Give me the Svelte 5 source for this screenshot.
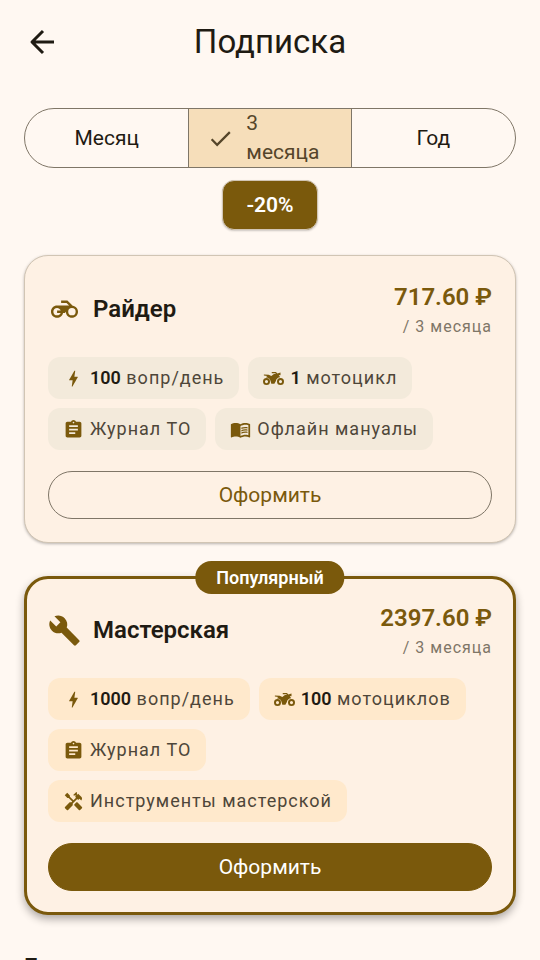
<script lang="ts">
  interface Feature {
    icon: string;
    count?: string;
    text: string;
  }

  interface Plan {
    id: string;
    name: string;
    icon: string;
    price: string;
    popular: boolean;
    features: Feature[];
  }

  const icons: Record<string, string> = {
    motorcycle:
      'M19.3 8.6L14.6 4H9v2.200h4.800l2.300 2.300H5.400c-3 0-5.400 2.400-5.400 5.400s2.400 5.400 5.400 5.400c2.650 0 4.800-1.900 5.300-4.300h1.600l.9-1.100c0 3 2.400 5.400 5.400 5.400s5.400-2.400 5.400-5.400c0-2.750-2.050-5-4.700-5.300zM8.600 15c-.5 1.300-1.750 2.200-3.200 2.200-1.850 0-3.300-1.450-3.300-3.300s1.450-3.300 3.300-3.300c1.450 0 2.700.9 3.200 2.200H5.400V15h3.200zM18.600 17.200a3.300 3.300 0 1 1 0-6.600 3.300 3.300 0 0 1 0 6.600z',
    wrench:
      'M22.7 19l-9.1-9.1c.9-2.3.4-5-1.5-6.9-2-2-5-2.4-7.4-1.3L9 6 6 9 1.6 4.7C.4 7.1.9 10.1 2.9 12.1c1.9 1.9 4.6 2.4 6.9 1.5l9.1 9.1c.4.4 1 .4 1.4 0l2.3-2.3c.5-.4.5-1.1.1-1.4z',
    bolt:
      'M11 21h-1l1-7H7.5c-.58 0-.57-.32-.38-.66.19-.34.05-.08.07-.12C8.48 10.94 10.42 7.54 13 3h1l-1 7h3.5c.49 0 .56.33.47.51l-.07.15C12.96 17.55 11 21 11 21z',
    bike:
      'M4 11.500a4 4 0 1 0 0 8 4 4 0 0 0 0-8zm0 2.200a1.800 1.800 0 1 1 0 3.600 1.800 1.800 0 0 1 0-3.600zM20 11.500a4 4 0 1 0 0 8 4 4 0 0 0 0-8zm0 2.200a1.800 1.800 0 1 1 0 3.600 1.800 1.800 0 0 1 0-3.600zM1 7.500l5.500.3 3 1.200 3-2.200h2.300L13.900 6H10V4.500h4.800l1.600 1.700L20 5v3.300l-2-.2 1.600 2.400c-2.600.2-4.500 1.800-5 4.500l-1.600 3H9.500L8.700 15c-.4-2.500-2.200-4.300-5.400-4.500l1.500-1.300L1 8.500z',
    journal:
      'M19 3h-4.18C14.4 1.84 13.3 1 12 1c-1.3 0-2.4.84-2.82 2H5c-1.1 0-2 .9-2 2v14c0 1.1.9 2 2 2h14c1.1 0 2-.9 2-2V5c0-1.1-.9-2-2-2zm-7 0c.55 0 1 .45 1 1s-.45 1-1 1-1-.45-1-1 .45-1 1-1zm2 14H7v-2h7v2zm3-4H7v-2h10v2zm0-4H7V7h10v2z',
    manual:
      'M21 5c-1.11-.35-2.33-.5-3.5-.5-1.95 0-4.05.4-5.5 1.5-1.45-1.1-3.55-1.5-5.5-1.5S2.45 4.9 1 6v14.65c0 .25.25.5.5.5.1 0 .15-.05.25-.05C3.1 20.45 5.05 20 6.5 20c1.95 0 4.05.4 5.5 1.5 1.35-.85 3.8-1.5 5.5-1.5 1.65 0 3.35.3 4.75 1.05.1.05.15.05.25.05.25 0 .5-.25.5-.5V6c-.6-.45-1.25-.75-2-1zm0 13.5c-1.1-.35-2.3-.5-3.5-.5-1.7 0-4.15.65-5.5 1.5V8c1.35-.85 3.8-1.5 5.5-1.5 1.2 0 2.4.15 3.5.5v11.5zM17.5 10.5c.88 0 1.73.09 2.5.26V9.24c-.79-.15-1.64-.24-2.5-.24-1.7 0-3.24.29-4.5.83v1.66c1.13-.64 2.7-.99 4.5-.99zM13 12.49v1.66c1.13-.64 2.7-.99 4.5-.99.88 0 1.73.09 2.5.26V11.9c-.79-.15-1.64-.24-2.5-.24-1.7 0-3.24.3-4.5.83zM17.5 14.33c-1.7 0-3.24.29-4.5.83v1.66c1.13-.64 2.7-.99 4.5-.99.88 0 1.73.09 2.5.26v-1.52c-.79-.16-1.64-.24-2.5-.24z',
    tools:
      'M21.67 18.17l-5.3-5.3h-.99l-2.54 2.54v.99l5.3 5.3c.39.39 1.02.39 1.41 0l2.12-2.12c.39-.38.39-1.02 0-1.41zM17.34 10.19l1.41-1.41 2.12 2.12c1.17-1.17 1.17-3.07 0-4.24l-3.54-3.54-1.41 1.41V1.71L15.22 1l-3.54 3.54.71.71h2.83l-1.41 1.41 1.06 1.06-2.89 2.89-4.13-4.13V5.06L4.83 2.04 2 4.87 5.03 7.9h1.41l4.13 4.13-.85.85H7.6l-5.3 5.3c-.39.39-.39 1.02 0 1.41l2.12 2.12c.39.39 1.02.39 1.41 0l5.3-5.3v-2.12l5.15-5.15 1.06 1.05z'
  };

  const periods = ['Месяц', '3 месяца', 'Год'];

  const plans: Plan[] = [
    {
      id: 'rider',
      name: 'Райдер',
      icon: 'motorcycle',
      price: '717.60 ₽',
      popular: false,
      features: [
        { icon: 'bolt', count: '100', text: 'вопр/день' },
        { icon: 'bike', count: '1', text: 'мотоцикл' },
        { icon: 'journal', text: 'Журнал ТО' },
        { icon: 'manual', text: 'Офлайн мануалы' }
      ]
    },
    {
      id: 'workshop',
      name: 'Мастерская',
      icon: 'wrench',
      price: '2397.60 ₽',
      popular: true,
      features: [
        { icon: 'bolt', count: '1000', text: 'вопр/день' },
        { icon: 'bike', count: '100', text: 'мотоциклов' },
        { icon: 'journal', text: 'Журнал ТО' },
        { icon: 'tools', text: 'Инструменты мастерской' }
      ]
    }
  ];

  let selected = $state('3 месяца');
</script>

<div class="screen">
  <header class="app-bar">
    <button class="back" type="button" aria-label="Назад">
      <svg viewBox="0 0 36 36" fill="none" stroke="currentColor" stroke-width="3">
        <path d="M30 18H8M19 7L8 18L19 29" stroke-linejoin="round" />
      </svg>
    </button>
    <h1>Подписка</h1>
  </header>

  <main>
    <!-- Period switch -->
    <div class="periods">
      {#each periods as period}
        <button
          type="button"
          class="period"
          class:selected={selected === period}
          aria-pressed={selected === period}
          onclick={() => (selected = period)}
        >
          {#if selected === period}
            <svg viewBox="0 0 24 24" fill="currentColor">
              <path d="M9 16.170L4.830 12l-1.420 1.410L9 19 21 7l-1.410-1.410z" />
            </svg>
          {/if}
          <span>{period}</span>
        </button>
      {/each}
    </div>
    <div class="discount">-20%</div>

    <!-- Plans -->
    <div class="plans">
      {#each plans as plan (plan.id)}
        <section class="plan" class:popular={plan.popular}>
          {#if plan.popular}
            <span class="ribbon">Популярный</span>
          {/if}
          <div class="plan-head">
            <svg class="plan-icon {plan.icon}" viewBox="0 0 24 24" fill="currentColor">
              <path d={icons[plan.icon]} fill-rule="evenodd" />
            </svg>
            <h2>{plan.name}</h2>
            <div class="cost">
              <strong>{plan.price}</strong>
              <span>/ 3 месяца</span>
            </div>
          </div>
          <ul class="features">
            {#each plan.features as feature}
              <li>
                <svg viewBox="0 0 24 24" fill="currentColor">
                  <path d={icons[feature.icon]} fill-rule="evenodd" />
                </svg>
                <span>{#if feature.count}<b>{feature.count}</b>{' '}{/if}{feature.text}</span>
              </li>
            {/each}
          </ul>
          <button class="subscribe" type="button">Оформить</button>
        </section>
      {/each}
    </div>

    <h2 class="extras">Гараж</h2>
  </main>
</div>

<style>
  :global(body) {
    background: #fff8f2;
  }

  .screen {
    --primary: #7a590c;
    --text: #1f1b13;
    --muted: #4e4639;
    --outline: #7f7667;
    font-family: Roboto, 'Noto Sans', sans-serif;
    color: var(--text);
  }

  h1,
  h2 {
    margin: 0;
    font-weight: 400;
  }

  button {
    font: inherit;
    color: inherit;
    cursor: pointer;
  }

  svg {
    flex: none;
    display: block;
  }

  .app-bar {
    display: grid;
    grid-template-columns: 84px 1fr 84px;
    align-items: center;
    height: 84px;
  }

  .back {
    justify-self: center;
    padding: 6px;
    border: 0;
    background: none;
  }

  .back svg {
    width: 36px;
    height: 36px;
  }

  h1 {
    font-size: 33px;
    line-height: 42px;
    text-align: center;
  }

  main {
    padding: 24px;
  }

  /* Period switch */
  .periods {
    display: grid;
    grid-template-columns: repeat(3, 1fr);
    height: 60px;
    box-sizing: border-box;
    border: 1px solid var(--outline);
    border-radius: 30px;
    overflow: hidden;
  }

  .period {
    display: flex;
    align-items: center;
    justify-content: center;
    gap: 12px;
    padding: 0 18px;
    border: 0;
    background: none;
    font-size: 21px;
    line-height: 29px;
    text-align: left;
  }

  .period.selected {
    border: solid var(--outline);
    border-width: 0 1px;
    background: #f6deba;
    color: #55452a;
  }

  .period svg {
    width: 27px;
    height: 27px;
  }

  .discount {
    width: fit-content;
    margin: 12px auto 0;
    padding: 9px 23px;
    border: 1px solid #d1c5b4;
    border-radius: 12px;
    background: var(--primary);
    box-shadow: 0 1px 2px rgba(0, 0, 0, 0.2);
    color: #fff;
    font-size: 21px;
    font-weight: 600;
    line-height: 30px;
  }

  /* Plans */
  .plans {
    display: flex;
    flex-direction: column;
    gap: 33px;
    margin-top: 25px;
  }

  .plan {
    position: relative;
    padding: 23px;
    border: 1px solid #d1c5b4;
    border-radius: 24px;
    background: #fef1e4;
    box-shadow: 0 1px 3px rgba(0, 0, 0, 0.28);
  }

  .plan.popular {
    padding: 21px;
    border: 3px solid var(--primary);
    box-shadow: 0 4px 8px rgba(0, 0, 0, 0.32);
  }

  .ribbon {
    position: absolute;
    top: -18px;
    left: 50%;
    transform: translateX(-50%);
    padding: 6px 21px;
    border-radius: 16px;
    background: var(--primary);
    color: #fff;
    font-size: 18px;
    font-weight: 600;
    line-height: 21px;
  }

  .plan-head {
    display: flex;
    align-items: center;
    gap: 12px;
  }

  .plan-icon {
    width: 33px;
    height: 33px;
    color: var(--primary);
  }

  .plan-icon.motorcycle {
    box-sizing: border-box;
    padding: 3px;
  }

  .plan h2 {
    flex: 1;
    font-size: 24px;
    font-weight: 600;
    line-height: 36px;
  }

  .cost {
    display: flex;
    flex-direction: column;
    align-items: flex-end;
  }

  .cost strong {
    color: var(--primary);
    font-size: 24px;
    font-weight: 600;
    line-height: 36px;
  }

  .cost span {
    color: var(--outline);
    font-size: 16px;
    letter-spacing: 1px;
    line-height: 24px;
  }

  .features {
    display: flex;
    flex-wrap: wrap;
    gap: 9px;
    margin: 18px 0 21px;
    padding: 0;
    list-style: none;
  }

  .features li {
    display: flex;
    align-items: center;
    gap: 6px;
    padding: 9px 15px;
    border-radius: 12px;
    background: #f3eadb;
    color: var(--muted);
    font-size: 18px;
    letter-spacing: 1px;
    line-height: 24px;
  }

  .popular .features li {
    background: #ffe9cc;
  }

  .features svg {
    width: 21px;
    height: 21px;
    color: var(--primary);
  }

  .features b {
    color: var(--text);
    font-weight: 600;
    letter-spacing: 0;
  }

  .subscribe {
    display: block;
    width: 100%;
    height: 48px;
    border: 1px solid var(--outline);
    border-radius: 24px;
    background: none;
    color: var(--primary);
    font-size: 21px;
    line-height: 30px;
  }

  .popular .subscribe {
    border-color: var(--primary);
    background: var(--primary);
    color: #fff;
  }

  .extras {
    margin-top: 34px;
    font-size: 24px;
    font-weight: 600;
    line-height: 36px;
  }
</style>
